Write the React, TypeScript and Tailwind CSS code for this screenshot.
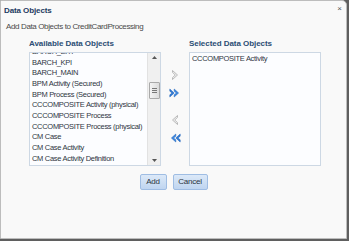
import React from "react";

const available = [
  "BARCH_EXT",
  "BARCH_KPI",
  "BARCH_MAIN",
  "BPM Activity (Secured)",
  "BPM Process (Secured)",
  "CCCOMPOSITE Activity (physical)",
  "CCCOMPOSITE Process",
  "CCCOMPOSITE Process (physical)",
  "CM Case",
  "CM Case Activity",
  "CM Case Activity Definition",
];

function Chevron({ dir, double, active }: { dir: "r" | "l"; double?: boolean; active?: boolean }) {
  const flip = dir === "l" ? "scale(-1,1) translate(-12,0)" : undefined;
  if (!active) {
    return (
      <svg width="12" height="12" viewBox="0 0 12 12">
        <g transform={flip}>
          <path d="M3.5 1.5 L8.5 6 L3.5 10.5 L3.5 8.6 L6.3 6 L3.5 3.4 Z" fill="#f4f4f4" stroke="#a9a9a9" strokeWidth="0.8" strokeLinejoin="round" />
        </g>
      </svg>
    );
  }
  return (
    <svg width="12" height="12" viewBox="0 0 12 12">
      <g transform={flip}>
        <path d="M0.8 2 L5.2 6 L0.8 10 L0.8 7.8 L3 6 L0.8 4.2 Z" fill="#2f7ad6" stroke="#1d5fb4" strokeWidth="0.5" />
        <path d="M5.2 2 L9.6 6 L5.2 10 L5.2 7.8 L7.4 6 L5.2 4.2 Z" fill="#3d8ae3" stroke="#1d5fb4" strokeWidth="0.5" />
      </g>
    </svg>
  );
}

function Button({ children, w }: { children: React.ReactNode; w: string }) {
  return (
    <div
      className={`${w} h-[16px] flex items-center justify-center rounded-[2px] border border-[#9fbde3] bg-gradient-to-b from-[#dce9f8] to-[#bfd5f0] text-[#2b3441] text-[8px] tracking-[-0.2px]`}
    >
      {children}
    </div>
  );
}

export default function App() {
  return (
    <div className="w-[349px] h-[241px] bg-[#5f5f5f]" style={{ fontFamily: '"Liberation Sans", Arial, sans-serif' }}>
      <div className="w-[347px] h-[239px] bg-[#f9f9f9] border border-[#bdbdbd] rounded-tr-[5px] flex flex-col">
        <div className="h-[19px] pl-[3px] pr-[4px] flex items-center justify-between">
          <span className="text-[8px] font-bold text-[#1d3b61] tracking-[-0.1px]">Data Objects</span>
          <span className="text-[8px] text-[#555] leading-none -mt-[3px]">×</span>
        </div>
        <div className="mt-[2px] pl-[5px] text-[8px] tracking-[-0.37px] text-[#4a4a4a] leading-[10px]">
          Add Data Objects to CreditCardProcessing
        </div>
        <div className="mt-[7px] pl-[28px] flex">
          <div className="w-[132px] flex flex-col">
            <div className="h-[9px] text-[8px] font-bold text-[#2b4d74] leading-[9px] tracking-[-0.05px]">Available Data Objects</div>
            <div className="mt-[4px] h-[114px] border border-[#cdd8e4] bg-[#fcfdff] flex overflow-hidden">
              <div className="flex-1 overflow-hidden">
                <div className="-mt-[6px] pl-[2px] flex flex-col">
                  {available.map((t) => (
                    <div key={t} className="h-[10.67px] leading-[10.67px] text-[7.5px] tracking-[-0.3px] text-[#2e3542] whitespace-nowrap">
                      {t}
                    </div>
                  ))}
                </div>
              </div>
              <div className="w-[13px] bg-[#f0f0f0] border-l border-[#e2e2e2] flex flex-col items-center">
                <div className="h-[8px] flex items-center justify-center">
                  <svg width="5" height="3" viewBox="0 0 5 3"><path d="M0 3 L2.5 0 L5 3 Z" fill="#555" /></svg>
                </div>
                <div className="mt-[21px] w-[11px] h-[17px] rounded-[1px] border border-[#a9a9a9] bg-gradient-to-r from-[#f3f3f3] to-[#dcdcdc] flex flex-col items-center justify-center gap-[1px]">
                  <div className="w-[5px] h-px bg-[#777]" />
                  <div className="w-[5px] h-px bg-[#777]" />
                  <div className="w-[5px] h-px bg-[#777]" />
                </div>
                <div className="flex-1" />
                <div className="h-[9px] flex items-center justify-center">
                  <svg width="5" height="3" viewBox="0 0 5 3"><path d="M0 0 L5 0 L2.5 3 Z" fill="#555" /></svg>
                </div>
              </div>
            </div>
          </div>
          <div className="w-[28px] flex flex-col items-center pt-[30px]">
            <Chevron dir="r" />
            <div className="mt-[6px]"><Chevron dir="r" double active /></div>
            <div className="mt-[15px]"><Chevron dir="l" /></div>
            <div className="mt-[6px]"><Chevron dir="l" double active /></div>
          </div>
          <div className="w-[132px] flex flex-col">
            <div className="h-[9px] text-[8px] font-bold text-[#2b4d74] leading-[9px] tracking-[-0.05px]">Selected Data Objects</div>
            <div className="mt-[4px] h-[114px] border border-[#cdd8e4] bg-[#fcfdff] pl-[2px]">
              <div className="h-[11px] leading-[11px] text-[7.5px] tracking-[-0.3px] text-[#2e3542] whitespace-nowrap">CCCOMPOSITE Activity</div>
            </div>
          </div>
        </div>
        <div className="mt-[8px] flex justify-center gap-[6px]">
          <Button w="w-[27px]">Add</Button>
          <Button w="w-[35px]">Cancel</Button>
        </div>
      </div>
    </div>
  );
}
